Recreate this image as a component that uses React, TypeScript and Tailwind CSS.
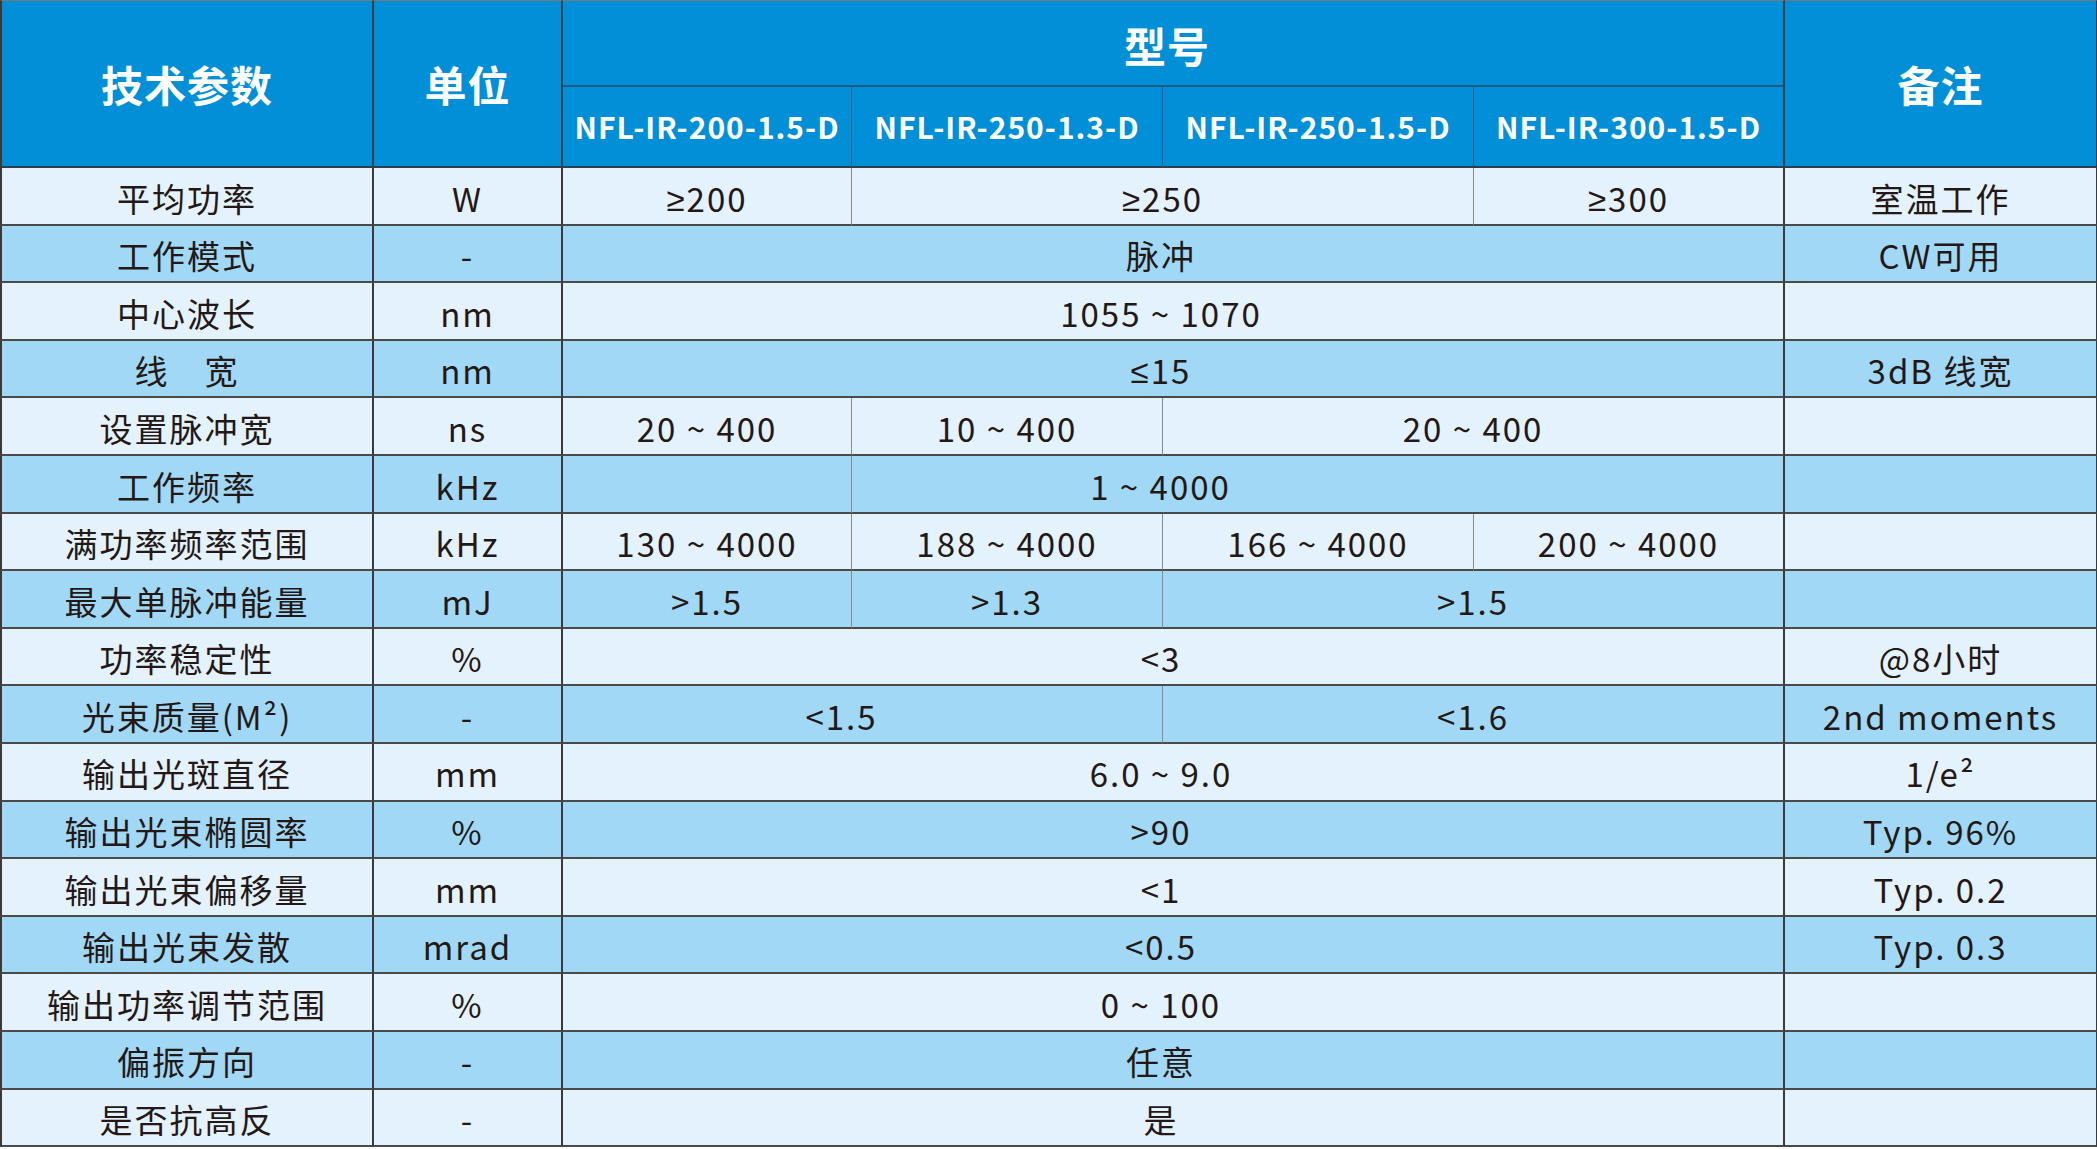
import React from "react";

type Cell = { text: string; span: number; pad?: string };
type Row = { name: string; unit: string; cells: Cell[]; note: string; dark: boolean };

const full = (text: string): Cell[] => [{ text, span: 4, pad: "pr-[24px]" }];

const rows: Row[] = [
  { name: "平均功率", unit: "W", cells: [{ text: "≥200", span: 1 }, { text: "≥250", span: 2 }, { text: "≥300", span: 1 }], note: "室温工作", dark: false },
  { name: "工作模式", unit: "-", cells: full("脉冲"), note: "CW可用", dark: true },
  { name: "中心波长", unit: "nm", cells: full("1055 ~ 1070"), note: "", dark: false },
  { name: "线　宽", unit: "nm", cells: full("≤15"), note: "3dB 线宽", dark: true },
  { name: "设置脉冲宽", unit: "ns", cells: [{ text: "20 ~ 400", span: 1 }, { text: "10 ~ 400", span: 1 }, { text: "20 ~ 400", span: 2 }], note: "", dark: false },
  { name: "工作频率", unit: "kHz", cells: [{ text: "", span: 1 }, { text: "1 ~ 4000", span: 3, pad: "pr-[314px]" }], note: "", dark: true },
  { name: "满功率频率范围", unit: "kHz", cells: [{ text: "130 ~ 4000", span: 1 }, { text: "188 ~ 4000", span: 1 }, { text: "166 ~ 4000", span: 1 }, { text: "200 ~ 4000", span: 1 }], note: "", dark: false },
  { name: "最大单脉冲能量", unit: "mJ", cells: [{ text: ">1.5", span: 1 }, { text: ">1.3", span: 1 }, { text: ">1.5", span: 2 }], note: "", dark: true },
  { name: "功率稳定性", unit: "%", cells: full("<3"), note: "@8小时", dark: false },
  { name: "光束质量(M²)", unit: "-", cells: [{ text: "<1.5", span: 2, pad: "pr-[42px]" }, { text: "<1.6", span: 2 }], note: "2nd moments", dark: true },
  { name: "输出光斑直径", unit: "mm", cells: full("6.0 ~ 9.0"), note: "1/e²", dark: false },
  { name: "输出光束椭圆率", unit: "%", cells: full(">90"), note: "Typ. 96%", dark: true },
  { name: "输出光束偏移量", unit: "mm", cells: full("<1"), note: "Typ. 0.2", dark: false },
  { name: "输出光束发散", unit: "mrad", cells: full("<0.5"), note: "Typ. 0.3", dark: true },
  { name: "输出功率调节范围", unit: "%", cells: full("0 ~ 100"), note: "", dark: false },
  { name: "偏振方向", unit: "-", cells: full("任意"), note: "", dark: true },
  { name: "是否抗高反", unit: "-", cells: full("是"), note: "", dark: false },
];

const models = ["NFL-IR-200-1.5-D", "NFL-IR-250-1.3-D", "NFL-IR-250-1.5-D", "NFL-IR-300-1.5-D"];

const spanClass: Record<number, string> = {
  1: "col-span-1",
  2: "col-span-2",
  3: "col-span-3",
  4: "col-span-4",
};

// the CJK font draws ≥ / ≤ slanted, the sheet uses the flat latin form
const renderValue = (text: string) => {
  const first = text.charAt(0);
  if (first === "≥" || first === "≤") {
    return (
      <>
        <span className="font-['Noto_Sans','DejaVu_Sans',sans-serif] font-light">{first}</span>
        {text.slice(1)}
      </>
    );
  }
  return text;
};

const SpecRow: React.FC<{ row: Row }> = ({ row }) => {
  const bg = row.dark ? "bg-[#a0d8f5]" : "bg-[#e3f2fc]";
  const base = `${bg} flex items-center justify-center pt-[5px] border-b-2 border-b-[#4a4a4a]`;
  let used = 0;
  return (
    <>
      <div className={`${base} border-l-2 border-l-[#3a3a3a] border-r-2 border-r-[#3a3a3a]`}>{row.name}</div>
      <div className={`${base} border-r-2 border-r-[#3a3a3a]`}>{row.unit}</div>
      {row.cells.map((c, i) => {
        used += c.span;
        const edge = used === 4 ? "border-r-2 border-r-[#3a3a3a]" : "border-r border-r-[#8a8a8a]";
        return (
          <div key={i} className={`${base} ${spanClass[c.span]} ${edge} ${c.pad ?? ""}`}>
            {renderValue(c.text)}
          </div>
        );
      })}
      <div className={`${base} border-r border-r-[#3a3a3a]`}>{row.note}</div>
    </>
  );
};

export default function App() {
  return (
    <div className="w-[2097px] h-[1149px] bg-white font-['Noto_Sans_CJK_SC','Noto_Sans',sans-serif] text-[33px] tracking-[2px] text-[#231815] overflow-hidden">
      <div className="grid grid-cols-[374px_189px_289px_311px_311px_311px_312px] grid-rows-[87px_81px_repeat(17,57.6px)]">
        {/* header */}
        <div className="row-span-2 bg-[#018fd7] text-white font-bold text-[42px] tracking-[1px] flex items-center justify-center border-t border-t-[#777] border-l-2 border-l-[#3a3a3a] border-r-2 border-r-[#2b3f4d] border-b-2 border-b-[#2b3f4d]">
          技术参数
        </div>
        <div className="row-span-2 bg-[#018fd7] text-white font-bold text-[42px] tracking-[1px] flex items-center justify-center border-t border-t-[#777] border-r-2 border-r-[#2b3f4d] border-b-2 border-b-[#2b3f4d]">
          单位
        </div>
        <div className="col-span-4 bg-[#018fd7] text-white font-bold text-[42px] tracking-[1px] flex items-center justify-center border-t border-t-[#777] border-r-2 border-r-[#2b3f4d] border-b-2 border-b-[#1f5a82] pt-[2px] pr-[12px]">
          型号
        </div>
        <div className="row-span-2 bg-[#018fd7] text-white font-bold text-[42px] tracking-[1px] flex items-center justify-center border-t border-t-[#777] border-r border-r-[#3a3a3a] border-b-2 border-b-[#2b3f4d]">
          备注
        </div>
        {models.map((m, i) => (
          <div
            key={m}
            className={`bg-[#018fd7] text-white font-bold text-[30px] tracking-[1px] flex items-center justify-center border-b-2 border-b-[#2b3f4d] ${
              i === 3 ? "border-r-2 border-r-[#2b3f4d]" : "border-r border-r-[#1f5a82]"
            }`}
          >
            {m}
          </div>
        ))}
        {rows.map((r) => (
          <SpecRow key={r.name} row={r} />
        ))}
      </div>
    </div>
  );
}
